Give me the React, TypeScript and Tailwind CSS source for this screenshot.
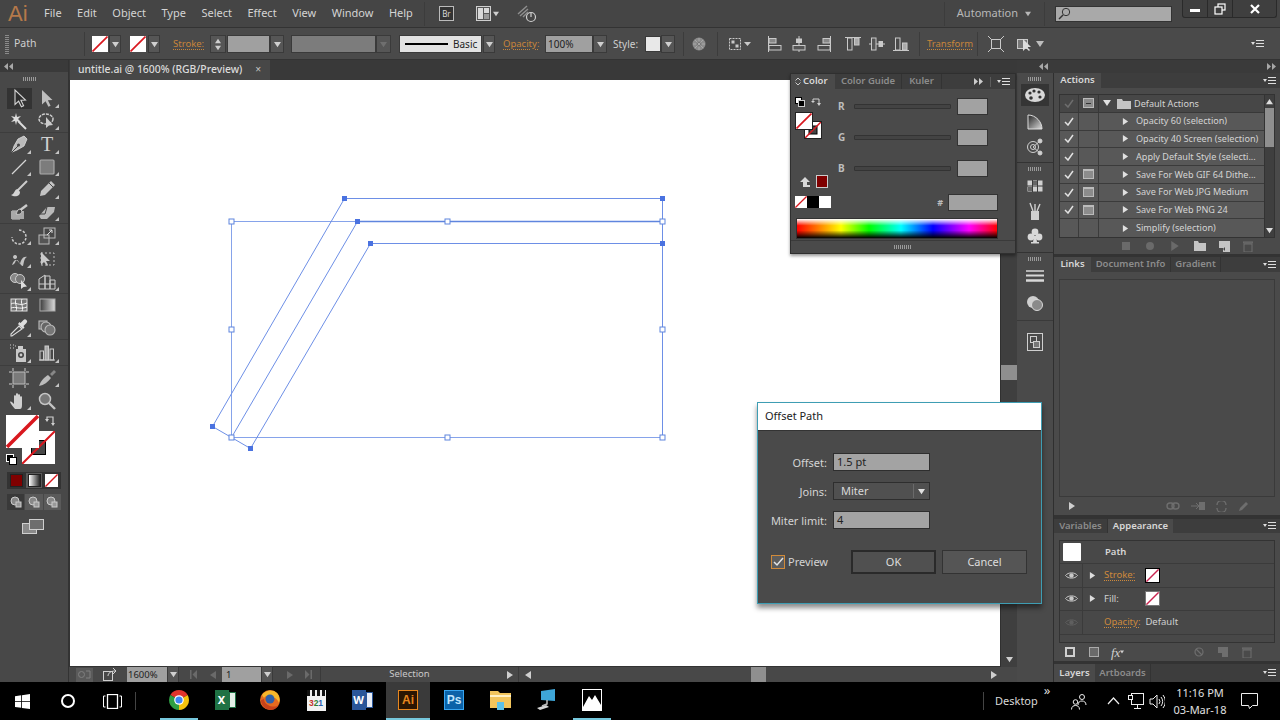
import React from "react";

const L = "#c9c9c9";

function NoneBox({ s = 16, className = "", c = "#d9181f" }: { s?: number; className?: string; c?: string }) {
  return (
    <svg width={s} height={s} viewBox="0 0 16 16" className={className}>
      <rect x="0" y="0" width="16" height="16" fill="#fff" />
      <line x1="0.5" y1="15.5" x2="15.5" y2="0.5" stroke={c} strokeWidth="1.7" />
    </svg>
  );
}

function Caret({ c = "#cfcfcf", dir = "down", s = 7 }: { c?: string; dir?: "down" | "right" | "left" | "up"; s?: number }) {
  const p = { down: "0,1 8,1 4,7", right: "1,0 7,4 1,8", left: "7,0 1,4 7,8", up: "0,7 8,7 4,1" }[dir];
  return (
    <svg width={s} height={s} viewBox="0 0 8 8">
      <polygon points={p} fill={c} />
    </svg>
  );
}

function Dd({ w = "w-[12px]", ml = "", c = "#cfcfcf" }: { w?: string; ml?: string; c?: string }) {
  return (
    <div className={`${w} ${ml} h-[18px] bg-[#565656] border border-[#3a3a3a] flex items-center justify-center shrink-0`}>
      <Caret c={c} />
    </div>
  );
}

function PanelMenu() {
  return (
    <svg width="14" height="10" viewBox="0 0 14 10">
      <polygon points="0,3 4,3 2,6" fill="#ddd" />
      <path d="M5 1.5h8M5 4.5h8M5 7.5h8" stroke="#ddd" strokeWidth="1" />
    </svg>
  );
}

function Grip({ w = 16 }: { w?: number }) {
  return (
    <svg width={w} height="4" viewBox={`0 0 ${w} 4`}>
      {Array.from({ length: Math.floor(w / 2) }).map((_, i) => (
        <rect key={i} x={i * 2} y="0" width="1" height="4" fill="#9a9a9a" />
      ))}
    </svg>
  );
}

function Sep({ ml = "", h = "h-[24px]" }: { ml?: string; h?: string }) {
  return <div className={`w-px ${h} ${ml} bg-[#3c3c3c] shrink-0`} />;
}

function Chev({ dir }: { dir: "left" | "right" }) {
  return (
    <svg width="9" height="7" viewBox="0 0 9 7">
      <path d={dir === "left" ? "M4 0v7L0 3.5zM9 0v7L5 3.5z" : "M0 0v7l4-3.5zM5 0v7l4-3.5z"} fill="#a8a8a8" />
    </svg>
  );
}

function AlignIcon({ v }: { v: number }) {
  const variants: React.ReactNode[] = [
    <g key="0"><path d="M1.5 0v16" stroke={L} /><rect x="2" y="2.5" width="7" height="4.5" fill="#888" stroke={L} /><rect x="2" y="9.5" width="12" height="4.5" fill="none" stroke={L} /></g>,
    <g key="1"><path d="M8 0v16" stroke={L} /><rect x="5" y="2.5" width="6" height="4.5" fill={L} /><rect x="2" y="9.5" width="12" height="4.5" fill="#555" stroke={L} /></g>,
    <g key="2"><path d="M14.5 0v16" stroke={L} /><rect x="7" y="2.5" width="7" height="4.5" fill="#888" stroke={L} /><rect x="2" y="9.5" width="12" height="4.5" fill="none" stroke={L} /></g>,
    <g key="3"><path d="M0 1.5h16" stroke={L} /><rect x="2.5" y="2" width="4.5" height="12" fill="none" stroke={L} /><rect x="9.5" y="2" width="4.5" height="7" fill="#aaa" stroke={L} /></g>,
    <g key="4"><path d="M0 8h16" stroke={L} /><rect x="2.5" y="2" width="4.5" height="12" fill="#555" stroke={L} /><rect x="9.5" y="5" width="4.5" height="6" fill={L} /></g>,
    <g key="5"><path d="M0 14.5h16" stroke={L} /><rect x="2.5" y="2" width="4.5" height="12" fill="none" stroke={L} /><rect x="9.5" y="7" width="4.5" height="7" fill="#aaa" stroke={L} /></g>,
  ];
  return <svg width="16" height="16" viewBox="0 0 16 16" className="shrink-0">{variants[v]}</svg>;
}

const toolIcons: Record<string, React.ReactNode> = {
  sel: <path d="M6 2v14.5l3.6-3.3 2.8 5.6 2.2-1-2.7-5.5 4.6-.3z" fill="#2d2d2d" stroke="#d5d5d5" strokeWidth="1.1" />,
  direct: <path d="M5 2v14.5l3.6-3.3 2.8 5.6 2.2-1-2.7-5.5 4.6-.3z" fill="#bdbdbd" />,
  wand: <g><path d="M9 10l8 8" stroke="#ddd" strokeWidth="2" /><path d="M7 2l1 4 4-1-3 3 3 3-4-1-1 4-1-4-4 1 3-3-3-3 4 1z" fill="#ddd" /></g>,
  lasso: <g><ellipse cx="9" cy="8" rx="7" ry="5" fill="none" stroke="#ccc" strokeWidth="1.5" strokeDasharray="3 1" /><path d="M9 6v11l3-2.5 4-.5z" fill="#ccc" /></g>,
  pen: <g><path d="M15 2l3 3-3 7-7 4-5 2 2-6 4-7z" fill="#bbb" stroke="#ddd" strokeWidth=".8" /><path d="M3 18l6-6" stroke="#444" /><circle cx="9.5" cy="11" r="1.5" fill="#444" /></g>,
  line: <path d="M3 17L17 3" stroke="#d5d5d5" strokeWidth="1.2" />,
  rect: <rect x="3" y="3" width="14" height="14" rx="1" fill="#7c7c7c" stroke="#a9a9a9" strokeWidth="1.2" />,
  brush: <g><path d="M18 2L9 11" stroke="#ccc" strokeWidth="2" /><path d="M9 10c-4 0-3 5-7 6 3 2 9 2 9-3z" fill="#d3d3d3" /></g>,
  pencil: <g><path d="M14 2l4 4-10 10-5 1 1-5z" fill="#c4c4c4" /><path d="M12 4l4 4" stroke="#444" /></g>,
  blob: <g><path d="M3 9h6l2-2v10H3z" fill="none" stroke="#ccc" strokeWidth="1" /><rect x="2" y="9" width="13" height="8" fill="#a8a8a8" /><path d="M18 3l-8 6" stroke="#ccc" strokeWidth="2.4" /><path d="M11 7c-3 0-3 4-4 5 3 1 6 0 6-3z" fill="#444" stroke="#ccc" /></g>,
  eraser: <g><path d="M2 14l8-9h8l-1 5-7 7H4z" fill="#b9b9b9" /><path d="M10 5l-2 7H2" stroke="#444" fill="none" /></g>,
  rotate: <path d="M10 4a7 7 0 1 1-7 7" fill="none" stroke="#ccc" strokeWidth="1.5" strokeDasharray="2.5 1.5" />,
  scale: <g><rect x="2" y="9" width="10" height="9" fill="#555" stroke="#bbb" /><rect x="7" y="2" width="11" height="10" fill="none" stroke="#bbb" /><path d="M10 9l5-5M12 4h3v3" stroke="#ddd" fill="none" /></g>,
  warp: <path d="M3 16c3-9 6-4 8-1 1-4 3-8 7-7-3 1-3 6-4 9-3 0-4-6-6-6s-1 4-5 5zM6 6a2 2 0 1 0 .1 0" fill="#c4c4c4" />,
  free: <g><rect x="4" y="4" width="13" height="12" fill="none" stroke="#bbb" strokeDasharray="2 2" /><path d="M4 3v13l3-3 3 4 1-1-2-4h4z" fill="#c9c9c9" /></g>,
  shape: <g><circle cx="6" cy="6" r="4.5" fill="#888" stroke="#ccc" /><circle cx="11" cy="7" r="4.5" fill="#777" stroke="#ccc" /><path d="M12 8v9l2.5-2 3.5-.5z" fill="#ddd" /></g>,
  persp: <g fill="none" stroke="#ccc"><path d="M2 17V7l6-4v14M8 17V4h5v13M13 17V8h5v9M2 12h16M2 17h16" /></g>,
  mesh: <g><rect x="2" y="4" width="16" height="12" fill="#777" stroke="#ddd" /><path d="M2 9c5-3 7 3 16-1M2 13c5-2 8 2 16-1M7 4c-2 4 2 8 0 12M13 4c-2 4 2 8 0 12" stroke="#fff" fill="none" strokeWidth=".9" /></g>,
  grad: <g><defs><linearGradient id="tg"><stop offset="0" stopColor="#3c3c3c" /><stop offset="1" stopColor="#dcdcdc" /></linearGradient></defs><rect x="3" y="4" width="15" height="12" fill="url(#tg)" stroke="#aaa" /></g>,
  drop: <g><path d="M3 18l-1 0 0-2 8-8 3 3z" fill="none" stroke="#ddd" strokeWidth="1.1" /><path d="M9 6l5 5 1.5-1.5-1-1.5 3-3a2 2 0 0 0-3-3l-3 3-1-1z" fill="#ddd" /></g>,
  blend: <g fill="#666" stroke="#bbb" strokeWidth="1.1"><rect x="2" y="3" width="8" height="8" /><circle cx="9" cy="9" r="5" /><circle cx="13" cy="12" r="5" fill="#777" /></g>,
  spray: <g><rect x="7" y="6" width="10" height="13" fill="#c8c8c8" /><circle cx="12" cy="12" r="3" fill="#444" /><circle cx="12" cy="12" r="1.4" fill="#ccc" /><rect x="9" y="3" width="5" height="3" fill="#ccc" /><path d="M1 2h1M4 2h1M1 5h1M4 5h1M6 3h1" stroke="#ccc" /></g>,
  graph: <g fill="none" stroke="#ccc"><path d="M2 17h16" /><rect x="3" y="8" width="3.5" height="9" /><rect x="8" y="3" width="3.5" height="14" fill="#aaa" /><rect x="13" y="6" width="3.5" height="11" /></g>,
  board: <g><rect x="4" y="4" width="12" height="12" fill="#7a7a7a" stroke="#bbb" /><path d="M4 0v3M16 0v3M4 17v3M16 17v3M0 4h3M0 16h3M17 4h3M17 16h3" stroke="#ccc" /></g>,
  slice: <g><path d="M2 18c2-6 6-9 9-11l3 3c-3 4-7 7-12 8z" fill="#bbb" /><path d="M13 6l4-4 2 2-4 4z" fill="#888" /></g>,
  hand: <path d="M6 18c-2-2-4-5-5-7 1-1 2 0 4 2V5c0-1 2-1 2 0v4-6c0-1 2-1 2 0v6-5c0-1 2-1 2 0v5-3c0-1 2-1 2 0v8c0 3-1 4-2 4z" fill="#d0d0d0" />,
  zoom: <g><circle cx="8" cy="8" r="5.5" fill="#777" stroke="#c4c4c4" strokeWidth="1.5" /><path d="M12 12l6 6" stroke="#c4c4c4" strokeWidth="2.4" /></g>,
};

function Tool({ id, fly, active }: { id: string; fly?: boolean; active?: boolean }) {
  return (
    <div className="relative flex items-center justify-center">
      {active && <div className="absolute left-[2px] right-[1px] top-px bottom-px bg-[#333333]" />}
      {id === "type" ? (
        <span className="relative font-['Liberation_Serif',serif] text-[20px] leading-none text-[#d0d0d0]">T</span>
      ) : (
        <svg width="20" height="20" viewBox="0 0 20 20" className="relative">{toolIcons[id]}</svg>
      )}
      {fly && <div className="absolute right-[2px] bottom-[2px] w-0 h-0 border-l-[4px] border-l-transparent border-b-[4px] border-b-[#c4c4c4]" />}
    </div>
  );
}

function ToolGroup({ h, items, last }: { h: string; items: [string, boolean, boolean?][]; last?: boolean }) {
  return (
    <div className={`${h} grid grid-cols-[28px_28px] auto-rows-fr pl-[5px] ${last ? "" : "border-b border-[#3d3d3d]"}`}>
      {items.map(([id, fly, active]) => (
        <Tool key={id} id={id} fly={fly} active={active} />
      ))}
    </div>
  );
}

function LeftTools() {
  return (
    <div className="w-[69px] shrink-0 bg-[#484848] border-r border-[#333333] flex flex-col">
      <div className="h-[12px] bg-[#3a3a3a] flex items-center pl-[4px]">
        <Chev dir="left" />
      </div>
      <div className="h-[15px] flex justify-center items-center pb-[2px] pr-[8px]"><Grip w={14} /></div>
      <ToolGroup h="h-[46px]" items={[["sel", false, true], ["direct", true], ["wand", false], ["lasso", true]]} />
      <ToolGroup h="h-[91px]" items={[["pen", true], ["type", true], ["line", true], ["rect", true], ["brush", false], ["pencil", true], ["blob", false], ["eraser", true]]} />
      <ToolGroup h="h-[70px]" items={[["rotate", true], ["scale", true], ["warp", true], ["free", false], ["shape", true], ["persp", true]]} />
      <ToolGroup h="h-[46px]" items={[["mesh", false], ["grad", false], ["drop", true], ["blend", false]]} />
      <ToolGroup h="h-[26px]" items={[["spray", true], ["graph", true]]} />
      <ToolGroup h="h-[46px]" last items={[["board", false], ["slice", true], ["hand", true], ["zoom", false]]} />
      <div className="relative h-[52px] mt-[3px]">
        <div className="absolute left-[22px] top-[16px] w-[33px] h-[33px] bg-white">
          <div className="absolute left-[9px] top-[9px] w-[15px] h-[15px] bg-[#484848] border border-black" />
          <svg width="33" height="33" viewBox="0 0 33 33" className="absolute inset-0">
            <line x1="0" y1="33" x2="33" y2="0" stroke="#d9181f" strokeWidth="2" />
          </svg>
        </div>
        <NoneBox s={33} className="absolute left-[6px] top-0" />
        <svg width="12" height="12" viewBox="0 0 12 12" className="absolute left-[45px] top-0">
          <path d="M2 5V2h6v6" stroke="#cfcfcf" fill="none" strokeWidth="1.2" />
          <polygon points="0,4 4,4 2,7" fill="#cfcfcf" />
          <polygon points="6,8 10,8 8,11" fill="#cfcfcf" />
        </svg>
        <div className="absolute left-[6px] top-[39px] w-[8px] h-[8px] bg-black border border-white" />
        <div className="absolute left-[9px] top-[42px] w-[8px] h-[8px] bg-white border border-black" />
      </div>
      <div className="mx-[7px] mt-[5px] h-[17px] flex bg-[#333333] p-px gap-px">
        <div className="flex-1 flex items-center justify-center"><div className="w-[13px] h-[13px] bg-[#7f0000] border border-[#222222]" /></div>
        <div className="flex-1 flex items-center justify-center bg-[#5a5a5a]"><div className="w-[13px] h-[13px] border border-[#222222] bg-[linear-gradient(to_right,#ffffff,#222222)]" /></div>
        <div className="flex-1 flex items-center justify-center"><NoneBox s={13} /></div>
      </div>
      <div className="mx-[7px] mt-[5px] h-[16px] flex gap-px">
        {[0, 1, 2].map((i) => (
          <div key={i} className={`flex-1 flex items-center justify-center ${i === 0 ? "bg-[#393939]" : "bg-[#5a5a5a]"}`}>
            <svg width="12" height="12" viewBox="0 0 12 12">
              <circle cx="5" cy="5" r="4" fill="#888" stroke="#ccc" />
              <rect x="6" y="6" width="5" height="5" fill="#999" stroke="#ccc" />
            </svg>
          </div>
        ))}
      </div>
      <div className="flex justify-center mt-[9px] pr-[2px]">
        <svg width="22" height="15" viewBox="0 0 22 15">
          <rect x="0.5" y="4.5" width="14" height="10" fill="#8a8a8a" stroke="#cfcfcf" />
          <rect x="7.5" y="0.5" width="14" height="10" fill="#6e6e6e" stroke="#cfcfcf" />
        </svg>
      </div>
    </div>
  );
}

function Canvas() {
  const handles: [number, number][] = [[231, 221], [447, 221], [662, 221], [231, 329], [662, 329], [231, 437], [447, 437], [662, 437]];
  const anchors: [number, number][] = [[344, 198], [357, 221], [370, 243], [212, 426], [250, 448], [662, 198], [662, 243]];
  return (
    <svg viewBox="70 80 930 586" className="block w-[930px] h-[586px]">
      <g fill="none" stroke="#6d8fe6" strokeWidth="1">
        <rect x="231.5" y="221.5" width="431" height="216" stroke="#86a3ea" />
        <path d="M344.5 198.5H662.5V437.5" />
        <path d="M344.5 198.5L212.5 426.5L231.5 437.5L250.5 448.5L370.5 243.5H662.5" />
        <path d="M231.5 437.5L357.5 221.5" />
        <path d="M357.5 221.5H662.5" strokeWidth="1.6" stroke="#5f85de" />
      </g>
      {handles.map(([x, y]) => (
        <rect key={`${x}-${y}`} x={x - 2} y={y - 2} width="5" height="5" fill="#fff" stroke="#5f85de" />
      ))}
      {anchors.map(([x, y]) => (
        <rect key={`${x}-${y}`} x={x - 2} y={y - 2} width="5" height="5" fill="#4a72e0" />
      ))}
    </svg>
  );
}

function ColorPanel() {
  return (
    <div className="absolute left-[790px] top-[73px] w-[226px] h-[181px] bg-[#4a4a4a] border border-[#2f2f2f] flex flex-col shadow-[0_2px_3px_rgba(0,0,0,0.4)]">
      <div className="h-[15px] bg-[#3d3d3d] flex items-stretch text-[9.5px] font-semibold shrink-0">
        <div className="w-[44px] bg-[#4a4a4a] flex items-center pl-[4px] gap-[2px] text-[#d8d8d8]">
          <svg width="6" height="9" viewBox="0 0 6 9"><path d="M0.5 3.5L3 1l2.5 2.5M0.5 5.5L3 8l2.5-2.5" fill="none" stroke="#ccc" /></svg>
          Color
        </div>
        <div className="w-[67px] flex items-center justify-center text-[#8c8c8c] border-r border-[#333333]">Color Guide</div>
        <div className="w-[40px] flex items-center justify-center text-[#8c8c8c] border-r border-[#333333]">Kuler</div>
        <div className="flex-1 flex items-center justify-end gap-[6px] pr-[4px]">
          <svg width="10" height="7" viewBox="0 0 10 7"><path d="M0 0l4 3.5L0 7zM5 0l4 3.5L5 7z" fill="#ccc" /></svg>
          <div className="w-px h-[10px] bg-[#5c5c5c]" />
          <PanelMenu />
        </div>
      </div>
      <div className="flex-1 flex">
        <div className="w-[47px] shrink-0 flex flex-col pl-[4px] pt-[7px]">
          <div className="flex items-center gap-[6px] h-[11px]">
            <div className="relative w-[10px] h-[10px]">
              <div className="absolute left-0 top-0 w-[7px] h-[7px] bg-white border border-black" />
              <div className="absolute left-[3px] top-[3px] w-[7px] h-[7px] bg-black border border-[#ccc]" />
            </div>
            <svg width="11" height="10" viewBox="0 0 11 10"><path d="M2 5V2h6v5" stroke="#cfcfcf" fill="none" /><polygon points="0,4 4,4 2,6" fill="#cfcfcf" /><polygon points="6,6 10,6 8,9" fill="#cfcfcf" /></svg>
          </div>
          <div className="relative h-[30px] mt-[5px]">
            <div className="absolute left-[9px] top-[9px] w-[18px] h-[18px] bg-white border border-[#222]">
              <svg width="16" height="16" viewBox="0 0 16 16"><rect x="4" y="4" width="8" height="8" fill="#444" stroke="#000" /><line x1="0" y1="16" x2="16" y2="0" stroke="#d9181f" strokeWidth="1.5" /></svg>
            </div>
            <NoneBox s={18} className="absolute left-0 top-0 border border-[#222]" />
          </div>
          <div className="flex items-center gap-[4px] mt-[33px] pl-[5px]">
            <svg width="10" height="10" viewBox="0 0 10 10"><path d="M5 0L10 5H7V8H10V10H3V5H0z" fill="#d8d8d8" /></svg>
            <div className="w-[12px] h-[13px] ml-[2px] bg-[#7f0000] border border-[#cccccc]" />
          </div>
          <div className="flex mt-[8px] w-[36px] h-[13px]">
            <NoneBox s={12} />
            <div className="w-[12px] h-[12px] bg-black" />
            <div className="w-[12px] h-[12px] bg-white" />
          </div>
        </div>
        <div className="flex-1 flex flex-col pt-[9px]">
          {["R", "G", "B"].map((c) => (
            <div key={c} className="h-[31px] flex items-start shrink-0">
              <div className="w-[16px] text-[10px] font-bold text-[#bdbdbd] leading-[17px]">{c}</div>
              <div className="w-[97px] h-[5px] mt-[6px] bg-[#434343] border border-[#333333] rounded-[1px]" />
              <div className="w-[31px] h-[17px] ml-[6px] bg-[#a2a2a2] border border-[#333333]" />
            </div>
          ))}
          <div className="flex items-center justify-end mt-[3px] pr-[17px] gap-[5px] h-[17px]">
            <span className="text-[9px] font-bold text-[#bdbdbd]">#</span>
            <div className="w-[50px] h-[17px] bg-[#a2a2a2] border border-[#333333]" />
          </div>
        </div>
      </div>
      <div className="ml-[5px] mr-[17px] mt-px h-[21px] bg-[linear-gradient(to_bottom,#ffffff_0%,rgba(255,255,255,0)_35%,rgba(0,0,0,0)_60%,#000000_100%),linear-gradient(to_right,#ff0000,#ffff00_22%,#00ff00_36%,#00ffff_52%,#0000ff_68%,#ff00ff_86%,#ff0000)] border border-[#333333] shrink-0" />
      <div className="h-[13px] mt-[1px] flex items-center justify-center border-t border-[#3a3a3a]"><Grip w={18} /></div>
    </div>
  );
}

function Dock() {
  const Icon = ({ children }: { children: React.ReactNode }) => (
    <div className="mx-[4px] h-[25px] flex items-center justify-center">{children}</div>
  );
  return (
    <div className="w-[37px] shrink-0 bg-[#3a3a3a] flex flex-col">
      <div className="h-[13px] flex items-center justify-end pr-[6px]"><Chev dir="left" /></div>
      <div className="h-[90px] bg-[#4a4a4a] border-b border-[#333333] border-r border-r-[#2f2f2f] pt-[2px]">
        <div className="flex justify-center h-[8px] items-center"><Grip w={14} /></div>
        <div className="mt-[1px] h-[22px] mx-[4px] bg-[#353535] flex items-center justify-center">
          <svg width="22" height="16" viewBox="0 0 22 16">
            <ellipse cx="11" cy="8" rx="10" ry="7" fill="#d8d8d8" />
            <circle cx="6" cy="6" r="1.6" fill="#333" /><circle cx="10" cy="4" r="1.6" fill="#333" /><circle cx="15" cy="5" r="1.6" fill="#333" /><circle cx="16" cy="10" r="1.6" fill="#333" /><circle cx="7" cy="11" r="1.8" fill="#333" />
          </svg>
        </div>
        <div className="h-[3px]" />
        <Icon>
          <svg width="16" height="16" viewBox="0 0 16 16"><defs><linearGradient id="dg" x1="0" y1="0" x2="1" y2="1"><stop offset="0" stopColor="#222" /><stop offset="1" stopColor="#ddd" /></linearGradient></defs><path d="M1 1c8 0 14 7 14 14H1z" fill="url(#dg)" stroke="#ddd" /></svg>
        </Icon>
        <Icon>
          <svg width="18" height="18" viewBox="0 0 18 18" fill="none" stroke="#d0d0d0"><circle cx="7" cy="9" r="5.5" /><circle cx="7" cy="9" r="2.5" /><path d="M7 9l7-6M7 9l7 6" /><circle cx="14" cy="3" r="2" fill="#d0d0d0" /><circle cx="14" cy="15" r="2" fill="#d0d0d0" /></svg>
        </Icon>
      </div>
      <div className="h-[90px] bg-[#4a4a4a] border-b border-[#333333] border-r border-r-[#2f2f2f] pt-[2px]">
        <div className="flex justify-center h-[8px] items-center"><Grip w={14} /></div>
        <Icon>
          <svg width="16" height="12" viewBox="0 0 16 12"><rect x=".5" y=".5" width="15" height="11" fill="#d0d0d0" /><path d="M5.5 0v12M10.5 0v12M0 6h16" stroke="#3c3c3c" /><rect x="1" y="7" width="4" height="4" fill="#666" /><rect x="6" y="1" width="4" height="4" fill="#666" /></svg>
        </Icon>
        <Icon>
          <svg width="14" height="20" viewBox="0 0 14 20"><rect x="3" y="10" width="8" height="9" fill="#d0d0d0" /><path d="M5 10L2 2M7 10V3M9 10l3-7" stroke="#d0d0d0" strokeWidth="1.4" /></svg>
        </Icon>
        <Icon>
          <svg width="16" height="16" viewBox="0 0 16 16" fill="#d8d8d8"><circle cx="8" cy="4" r="3.4" /><circle cx="4" cy="9" r="3.4" /><circle cx="12" cy="9" r="3.4" /><path d="M7 8h2l1 6H6z" /><rect x="4" y="14" width="8" height="1.5" /></svg>
        </Icon>
      </div>
      <div className="flex-1 bg-[#4a4a4a] border-r border-[#2f2f2f] pt-[2px]">
        <div className="flex justify-center h-[8px] items-center"><Grip w={14} /></div>
        <Icon>
          <svg width="18" height="12" viewBox="0 0 18 12"><path d="M0 1h18" stroke="#d8d8d8" strokeWidth="1.5" /><path d="M0 5.5h18" stroke="#d8d8d8" strokeWidth="2" /><path d="M0 10.5h18" stroke="#d8d8d8" strokeWidth="2.5" /></svg>
        </Icon>
        <div className="h-[2px]" />
        <Icon>
          <svg width="18" height="18" viewBox="0 0 18 18"><circle cx="7" cy="8" r="6" fill="#cfcfcf" /><circle cx="11" cy="11" r="5.5" fill="#8a8a8a" stroke="#d8d8d8" /></svg>
        </Icon>
        <div className="h-[6px] border-b border-[#3a3a3a]" />
        <div className="h-[8px]" />
        <Icon>
          <svg width="16" height="18" viewBox="0 0 16 18" fill="none" stroke="#cfcfcf"><rect x=".5" y=".5" width="15" height="17" /><rect x="3.5" y="3.5" width="6" height="6" /><rect x="6.5" y="8.5" width="6" height="6" fill="#777" /></svg>
        </Icon>
      </div>
    </div>
  );
}

function Tabs({ tabs, active, h = "h-[15px]" }: { tabs: [string, string][]; active: string; h?: string }) {
  return (
    <div className={`${h} shrink-0 bg-[#3d3d3d] flex items-stretch text-[9.5px] font-semibold`}>
      {tabs.map(([t, w]) => (
        <div key={t} className={`${w} flex items-center justify-center whitespace-nowrap ${t === active ? "bg-[#4a4a4a] text-[#d8d8d8]" : "text-[#8c8c8c] border-r border-[#333333]"}`}>{t}</div>
      ))}
      <div className="flex-1 flex items-center justify-end pr-[3px]"><PanelMenu /></div>
    </div>
  );
}

function FootIcons({ children, h = "h-[18px]" }: { children: React.ReactNode; h?: string }) {
  return <div className={`${h} shrink-0 relative flex items-center`}>{children}</div>;
}

const Chk = ({ dim }: { dim?: boolean }) => (
  <svg width="10" height="9" viewBox="0 0 10 9"><path d="M1 5l3 3 5-7" fill="none" stroke={dim ? "#6e6e6e" : "#e2e2e2"} strokeWidth="1.5" /></svg>
);

function Actions() {
  const rows: [string, boolean, boolean][] = [
    ["Opacity 60 (selection)", true, false],
    ["Opacity 40 Screen (selection)", true, false],
    ["Apply Default Style (selecti...", true, false],
    ["Save For Web GIF 64 Dithe...", true, true],
    ["Save For Web JPG Medium", true, true],
    ["Save For Web PNG 24", true, true],
    ["Simplify (selection)", false, false],
  ];
  return (
    <div className="h-[181px] shrink-0 flex flex-col">
      <Tabs tabs={[["Actions", "w-[47px]"]]} active="Actions" />
      <div className="flex-1 bg-[#4a4a4a] flex flex-col pt-[6px]">
        <div className="mx-[5px] h-[144px] border border-[#333333] flex shrink-0">
          <div className="flex-1 grid auto-rows-fr text-[9.1px] text-[#d4d4d4]">
            <div className="flex items-stretch bg-[#474747] border-b border-[#383838]">
              <div className="w-[19px] flex items-center justify-center border-r border-[#383838]"><Chk dim /></div>
              <div className="w-[20px] flex items-center justify-center border-r border-[#383838]"><div className="w-[11px] h-[10px] bg-[#8c8c8c] border border-[#bbbbbb] flex items-center justify-center"><div className="w-[5px] h-px bg-[#333333]" /></div></div>
              <div className="flex items-center pl-[4px]"><Caret s={8} c="#e0e0e0" /></div>
              <svg width="14" height="11" viewBox="0 0 14 11" className="ml-[6px] self-center"><path d="M0 1h5l1 2h8v8H0z" fill="#c4c4c4" /></svg>
              <div className="flex items-center pl-[3px] whitespace-nowrap">Default Actions</div>
            </div>
            {rows.map(([t, c, b]) => (
              <div key={t} className="flex items-stretch bg-[#585858] border-b border-[#3b3b3b] last:border-b-0 whitespace-nowrap">
                <div className="w-[19px] flex items-center justify-center border-r border-[#3b3b3b]">{c && <Chk />}</div>
                <div className="w-[20px] flex items-center justify-center border-r border-[#3b3b3b]">{b && <div className="w-[11px] h-[10px] bg-[#8c8c8c] border border-[#bbbbbb] border-t-[2px]" />}</div>
                <div className="flex items-center pl-[23px]"><Caret dir="right" s={7} c="#e0e0e0" /></div>
                <div className="flex items-center pl-[7px]">{t}</div>
              </div>
            ))}
          </div>
          <div className="w-[10px] bg-[#3f3f3f] flex flex-col items-center border-l border-[#333333]">
            <div className="h-[13px] flex items-center"><Caret dir="up" c="#dddddd" /></div>
            <div className="w-full h-[39px] bg-[#8f8f8f]" />
            <div className="flex-1" />
            <div className="h-[13px] flex items-center"><Caret c="#dddddd" /></div>
          </div>
        </div>
        <FootIcons h="h-[16px]">
          <div className="ml-[68px] flex items-center">
            <div className="w-[8px] h-[8px] bg-[#6a6a6a]" />
            <div className="ml-[16px] w-[8px] h-[8px] rounded-full bg-[#6a6a6a]" />
            <div className="ml-[16px]"><Caret dir="right" s={10} c="#6a6a6a" /></div>
            <svg width="12" height="10" viewBox="0 0 12 10" className="ml-[14px]"><path d="M0 0h4l1 2h7v8H0z" fill="#c4c4c4" /></svg>
            <svg width="11" height="11" viewBox="0 0 11 11" className="ml-[13px]"><path d="M0 0h11v11H4V7H0z" fill="#c4c4c4" /><path d="M4 8l2-2v4z" fill="#444" /></svg>
            <svg width="10" height="11" viewBox="0 0 10 11" className="ml-[13px]"><path d="M1 3h8v8H1zM0 1h10v1H0z" fill="none" stroke="#6e6e6e" /></svg>
          </div>
        </FootIcons>
      </div>
    </div>
  );
}

function Links() {
  return (
    <div className="h-[258px] mt-[3px] shrink-0 flex flex-col">
      <Tabs tabs={[["Links", "w-[37px]"], ["Document Info", "w-[80px]"], ["Gradient", "w-[50px]"]]} active="Links" />
      <div className="flex-1 bg-[#4a4a4a] flex flex-col pt-[7px]">
        <div className="mx-[5px] h-[218px] border border-[#3a3a3a] bg-[#4a4a4a] shrink-0" />
        <FootIcons>
          <div className="ml-[14px]"><Caret dir="right" s={8} c="#cfcfcf" /></div>
          <div className="ml-auto mr-[31px] flex items-center gap-[11px]">
            <svg width="14" height="8" viewBox="0 0 14 8" fill="none" stroke="#6e6e6e" strokeWidth="1.4"><rect x="1" y="1" width="7" height="6" rx="3" /><rect x="6" y="1" width="7" height="6" rx="3" /></svg>
            <svg width="14" height="10" viewBox="0 0 14 10"><path d="M0 5h7M5 2l3 3-3 3" stroke="#6e6e6e" fill="none" /><rect x="8" y="1" width="6" height="8" fill="#6e6e6e" /></svg>
            <svg width="11" height="11" viewBox="0 0 11 11" fill="none" stroke="#6e6e6e" strokeWidth="1.3"><path d="M1 4a4.5 4.5 0 0 1 9 0M10 7a4.5 4.5 0 0 1-9 0" /></svg>
            <svg width="11" height="11" viewBox="0 0 11 11"><path d="M1 10l1-3 6-6 2 2-6 6z" fill="#6e6e6e" /></svg>
          </div>
        </FootIcons>
      </div>
    </div>
  );
}

function Eye({ dim }: { dim?: boolean }) {
  const c = dim ? "#5f5f5f" : "#c8c8c8";
  return (
    <svg width="13" height="9" viewBox="0 0 13 9">
      <path d="M.5 4.5C3 1 10 1 12.5 4.5 10 8 3 8 .5 4.5z" fill="none" stroke={c} />
      <circle cx="6.5" cy="4.5" r="2.2" fill={c} />
    </svg>
  );
}

function Appearance() {
  const O = "text-[#cf8a3c] underline decoration-dotted underline-offset-2";
  const Row = ({ eye, dim, caret, children }: { eye?: boolean; dim?: boolean; caret?: boolean; children: React.ReactNode }) => (
    <div className="h-[23.5px] flex items-stretch border-b border-[#3b3b3b] text-[9.5px] text-[#d0d0d0]">
      <div className="w-[23px] border-r border-[#3b3b3b] flex items-center justify-center">{eye && <Eye dim={dim} />}</div>
      <div className="w-[21px] flex items-center justify-center pr-[3px]">{caret && <Caret dir="right" s={7} c="#dddddd" />}</div>
      <div className="flex items-center">{children}</div>
    </div>
  );
  return (
    <div className="h-[142px] mt-[4px] shrink-0 flex flex-col">
      <Tabs h="h-[14px]" tabs={[["Variables", "w-[54px]"], ["Appearance", "w-[65px]"]]} active="Appearance" />
      <div className="flex-1 bg-[#4a4a4a] flex flex-col pt-[7px]">
        <div className="mx-[5px] h-[103px] border border-[#333333] shrink-0 bg-[#484848] flex flex-col">
          <div className="h-[23px] flex items-center border-b border-[#3b3b3b]">
            <div className="ml-[3px] w-[18px] h-[18px] bg-white rounded-[1px]" />
            <span className="ml-[24px] text-[9.5px] font-semibold text-[#d8d8d8]">Path</span>
          </div>
          <Row eye caret>
            <span className={`${O} w-[41px]`}>Stroke:</span>
            <NoneBox s={15} c="#c9234f" className="border border-black" />
          </Row>
          <Row eye caret>
            <span className="w-[41px]">Fill:</span>
            <NoneBox s={15} c="#c9234f" className="border border-[#777777]" />
          </Row>
          <Row eye dim>
            <span className={O}>Opacity:</span>
            <span className="ml-[5px]">Default</span>
          </Row>
        </div>
        <FootIcons>
          <div className="ml-[11px] flex items-center w-[200px]">
            <div className="w-[10px] h-[10px] border-2 border-[#cfcfcf]" />
            <div className="ml-[14px] w-[10px] h-[10px] bg-[#6a6a6a] border border-[#aaaaaa]" />
            <span className="ml-[12px] font-['Liberation_Serif',serif] italic text-[13px] leading-none text-[#d0d0d0]">fx</span>
            <Caret s={4} />
            <div className="ml-auto flex items-center gap-[14px] pr-[13px]">
              <svg width="10" height="10" viewBox="0 0 10 10" fill="none" stroke="#6e6e6e" strokeWidth="1.2"><circle cx="5" cy="5" r="4" /><path d="M2 2l6 6" /></svg>
              <svg width="10" height="10" viewBox="0 0 10 10"><path d="M0 0h10v10H4V6H0z" fill="#6e6e6e" /></svg>
              <svg width="10" height="11" viewBox="0 0 10 11"><path d="M1 3h8v8H1zM0 1h10v1H0z" fill="none" stroke="#6e6e6e" /></svg>
            </div>
          </div>
        </FootIcons>
      </div>
    </div>
  );
}

function Dialog() {
  const Label = ({ children }: { children: React.ReactNode }) => <div className="w-[70px] text-right text-[11px] text-[#d4d4d4] leading-none pr-[1px] whitespace-nowrap">{children}</div>;
  const Field = ({ children }: { children: React.ReactNode }) => (
    <div className="w-[97px] h-[18px] ml-[5px] bg-[#a3a3a3] border border-[#2e2e2e] pl-[3px] text-[11px] leading-[16px] text-[#222222]">{children}</div>
  );
  return (
    <div className="absolute left-[757px] top-[402px] w-[285px] h-[202px] bg-[#4a4a4a] border border-[#3e9db3] flex flex-col shadow-[0_4px_5px_rgba(0,0,0,0.45)]">
      <div className="h-[28px] bg-white border-b border-[#333333] pl-[7px] flex items-center text-[11px] text-[#222222] shrink-0">Offset Path</div>
      <div className="flex items-center pt-[22px]">
        <Label>Offset:</Label>
        <Field>1.5 pt</Field>
      </div>
      <div className="flex items-center mt-[11px]">
        <Label>Joins:</Label>
        <div className="w-[97px] h-[18px] ml-[5px] bg-[#505050] border border-[#2e2e2e] flex items-center pl-[7px] text-[11px] text-[#d8d8d8]">
          <span className="flex-1">Miter</span>
          <div className="w-[16px] h-[14px] border-l border-[#6a6a6a] flex items-center justify-center"><Caret c="#e0e0e0" /></div>
        </div>
      </div>
      <div className="flex items-center mt-[11px]">
        <Label>Miter limit:</Label>
        <Field>4</Field>
      </div>
      <div className="flex items-center mt-[21px] pl-[13px]">
        <div className="w-[14px] h-[14px] border border-[#d08a3a] bg-[#5c5c5c] flex items-center justify-center">
          <svg width="11" height="10" viewBox="0 0 11 10"><path d="M1 5l3 3 6-7" fill="none" stroke="#e4e4e4" strokeWidth="1.5" /></svg>
        </div>
        <span className="ml-[3px] w-[51px] text-[11px] text-[#d4d4d4]">Preview</span>
        <button className="w-[85px] h-[24px] ml-[12px] bg-[#505050] border-2 border-[#2a2a2a] text-[11px] text-[#dddddd]">OK</button>
        <button className="w-[85px] h-[24px] ml-[6px] bg-[#555555] border border-[#333333] text-[11px] text-[#dddddd]">Cancel</button>
      </div>
    </div>
  );
}

function Taskbar() {
  const Slot = ({ w = "w-[46px]", active, under, children }: { w?: string; active?: boolean; under?: boolean; children: React.ReactNode }) => (
    <div className={`${w} h-full shrink-0 flex items-center justify-center border-b-[2px] ${under || active ? "border-b-[#76c7dc]" : "border-b-transparent"} ${active ? "bg-[#3a3a3a]" : ""}`}>{children}</div>
  );
  const B = "font-['Liberation_Sans',sans-serif] font-bold leading-none";
  return (
    <div className="h-[38px] shrink-0 bg-black flex items-stretch">
      <div className="w-[45px] flex items-center justify-center">
        <svg width="15" height="15" viewBox="0 0 15 15" fill="#fff"><path d="M0 2.2L6.2 1.3v5.9H0zM7 1.2L15 0v7.2H7zM0 7.9h6.2v5.9L0 12.9zM7 7.9h8V15l-8-1.1z" /></svg>
      </div>
      <div className="w-[45px] flex items-center justify-center"><div className="w-[14px] h-[14px] rounded-full border-2 border-white" /></div>
      <div className="w-[45px] flex items-center justify-center">
        <svg width="19" height="15" viewBox="0 0 19 15" fill="none" stroke="#fff"><rect x="4.5" y="0.5" width="10" height="14" strokeWidth="1.3" /><path d="M2.5 2H.5v11h2M16.5 2h2v11h-2" /></svg>
      </div>
      <div className="w-[1px] h-[18px] self-center bg-[#444444]" />
      <div className="w-[24px]" />
      <Slot w="w-[38px]" under>
        <svg width="22" height="22" viewBox="0 0 22 22">
          <path d="M11 11L2.34 6A10 10 0 0 1 19.66 6Z" fill="#e0332c" />
          <path d="M11 11L2.34 6A10 10 0 0 0 11 21Z" fill="#2f9e44" />
          <path d="M11 11L19.66 6A10 10 0 0 1 11 21Z" fill="#f4c20d" />
          <circle cx="11" cy="11" r="4.8" fill="#fff" />
          <circle cx="11" cy="11" r="3.6" fill="#3f85f4" />
        </svg>
      </Slot>
      <Slot w="w-[54px]">
        <div className="relative flex items-center">
          <div className="w-[14px] h-[20px] bg-[#1f7244] text-white text-[11px] flex items-center justify-center font-bold">X</div>
          <div className="w-[7px] h-[16px] bg-[#e3efe7] border border-[#1f7244]" />
        </div>
      </Slot>
      <Slot w="w-[36px]">
        <svg width="22" height="22" viewBox="0 0 22 22">
          <circle cx="11" cy="11" r="10" fill="#e66a1f" />
          <path d="M3 6c3-5 11-6 15-2 3 3 3 8 2 10-1-3-3-5-5-5l-3-2C9 6 6 7 5 9z" fill="#f6b62b" />
          <circle cx="11" cy="10" r="4.5" fill="#2f5fa8" />
          <path d="M2 11c0 6 5 10 10 10 3 0 6-2 8-5-3 2-8 2-11 0-2-1-4-3-4-6z" fill="#c8421a" />
        </svg>
      </Slot>
      <Slot w="w-[56px]">
        <div className="w-[19px] h-[21px] bg-[#f2f2f2] flex flex-col">
          <div className="h-[6px] bg-[repeating-linear-gradient(90deg,#111111_0,#111111_3px,#eeeeee_3px,#eeeeee_5px)]" />
          <div className={`${B} text-[8.5px] flex-1 flex items-center justify-center whitespace-nowrap`}>
            <span className="text-[#c4302b]">3</span><span className="text-[#2f7d32]">2</span><span className="text-[#2b5fb0]">1</span>
          </div>
        </div>
      </Slot>
      <Slot w="w-[36px]">
        <div className="flex items-center">
          <div className="w-[14px] h-[20px] bg-[#2a5699] text-white text-[11px] flex items-center justify-center font-bold">W</div>
          <div className="w-[7px] h-[16px] bg-[#e9eef7] border border-[#2a5699]" />
        </div>
      </Slot>
      <div className="w-[6px]" />
      <Slot w="w-[44px]" active>
        <div className={`w-[20px] h-[20px] bg-[#2b1603] border border-[#e8871e] text-[#e8871e] text-[12px] flex items-center justify-center ${B}`}>Ai</div>
      </Slot>
      <Slot w="w-[48px]">
        <div className={`w-[20px] h-[20px] bg-[#0b62a8] border border-[#37a5f0] text-[#bfe4fb] text-[12px] flex items-center justify-center ${B}`}>Ps</div>
      </Slot>
      <Slot w="w-[44px]">
        <svg width="21" height="20" viewBox="0 0 21 20"><path d="M0 1h8l2 2h11v15H0z" fill="#f2c55c" /><rect x="0" y="5" width="21" height="2" fill="#fff1c4" /><rect x="7" y="12" width="7" height="8" fill="#5cc1e8" /></svg>
      </Slot>
      <Slot w="w-[46px]">
        <svg width="24" height="24" viewBox="0 0 24 24"><path d="M8 3l14-2v12L8 12z" fill="#3ea6d8" /><path d="M4 20l9-3 3 2-9 3z" fill="#d6d6d6" /><path d="M14 12v4l-5 2" stroke="#bdbdbd" fill="none" strokeWidth="1.5" /></svg>
      </Slot>
      <div className="w-[5px]" />
      <Slot w="w-[38px]" under>
        <svg width="20" height="22" viewBox="0 0 20 22"><rect width="20" height="22" fill="#fff" /><rect x="1" y="1" width="18" height="17" fill="#000" /><path d="M1 18L7 7l3 4 3-5 6 10v6H1z" fill="#fff" /></svg>
      </Slot>
      <div className="flex-1" />
      <div className="w-px h-[18px] self-center bg-[#444444]" />
      <div className="w-[53px] pl-[11px] flex items-center text-[11px] text-[#d8d8d8]">Desktop</div>
      <div className="w-[20px] text-center text-[13px] text-[#dddddd] leading-none pt-[2px]">»</div>
      <div className="w-[44px] flex items-center justify-center">
        <svg width="16" height="17" viewBox="0 0 16 17" fill="none" stroke="#eeeeee"><circle cx="11" cy="4" r="2.5" /><path d="M7 12c0-3 2-4 4-4s4 1 4 4" /><circle cx="4.5" cy="9" r="2.3" /><path d="M.5 16.5c0-3 2-4 4-4s4 1 4 4" /></svg>
      </div>
      <div className="w-[24px] flex items-center justify-center">
        <svg width="13" height="8" viewBox="0 0 13 8" fill="none" stroke="#eeeeee" strokeWidth="1.2"><path d="M1 7l5.5-6L12 7" /></svg>
      </div>
      <div className="w-[22px] flex items-center justify-center">
        <svg width="16" height="17" viewBox="0 0 16 17" fill="none" stroke="#eeeeee"><rect x="3.5" y=".5" width="12" height="11" /><rect x=".5" y="2.5" width="4" height="4" fill="#000" /><path d="M9.5 12v3M6 15.5h7" /></svg>
      </div>
      <div className="w-[20px] flex items-center justify-center">
        <svg width="16" height="15" viewBox="0 0 16 15" fill="none" stroke="#eeeeee"><path d="M1 5v5h3l4 4V1L4 5z" /><path d="M10 5a4 4 0 0 1 0 5M12 3a7 7 0 0 1 0 9M14 1a10 10 0 0 1 0 13" /></svg>
      </div>
      <div className="w-[66px] flex flex-col items-center justify-center text-[11px] leading-[17px] text-[#e0e0e0] whitespace-nowrap">
        <div>11:16 PM</div>
        <div>03-Mar-18</div>
      </div>
      <div className="w-[47px] flex items-center justify-center pr-[15px]">
        <svg width="17" height="17" viewBox="0 0 17 17" fill="none" stroke="#eeeeee"><path d="M.5.5h16v12h-5l-3 3-1-3H.5z" /></svg>
      </div>
    </div>
  );
}

export default function App() {
  const O = "text-[#c8853a] underline decoration-dotted underline-offset-2";
  const menu = ["File", "Edit", "Object", "Type", "Select", "Effect", "View", "Window", "Help"];
  return (
    <div className="relative w-[1280px] h-[720px] overflow-hidden flex flex-col bg-[#3a3a3a] font-['Noto_Sans','Open_Sans',sans-serif] text-[11px]">
      {/* application bar */}
      <div className="h-[28px] shrink-0 bg-[#454545] border-b border-[#333333] flex items-center text-[#d4d4d4]">
        <span className="w-[44px] pl-[8px] text-[22px] leading-none text-[#b5794a] font-['Liberation_Sans',sans-serif]">Ai</span>
        <div className="flex items-center gap-[15.5px]">
          {menu.map((m) => <span key={m}>{m}</span>)}
        </div>
        <Sep ml="ml-[11px]" />
        <div className="ml-[14px] w-[15px] h-[15px] border border-[#bbbbbb] bg-[#333333] text-[8px] text-[#d8d8d8] flex items-center justify-center">Br</div>
        <svg width="15" height="15" viewBox="0 0 15 15" className="ml-[22px]"><rect x=".5" y=".5" width="14" height="14" fill="#555" stroke="#cfcfcf" /><rect x="2" y="2" width="5" height="11" fill="#d8d8d8" /><rect x="8" y="2" width="5" height="5" fill="#d8d8d8" /><rect x="8" y="8" width="5" height="5" fill="#999" /></svg>
        <div className="ml-[2px]"><Caret s={6} /></div>
        <svg width="20" height="18" viewBox="0 0 20 18" className="ml-[18px]" fill="none" stroke="#8f8f8f"><path d="M1 9l9-8M3 11l8-7M6 12l5-5" strokeWidth="1.4" /><circle cx="14" cy="12" r="4.5" stroke="#d0d0d0" strokeWidth="1.2" /><path d="M14 8v4" stroke="#d0d0d0" strokeWidth="1.2" /></svg>
        <div className="flex-1" />
        <Sep />
        <span className="ml-[12px] text-[#b8b8b8]">Automation</span>
        <div className="ml-[7px]"><Caret s={6} c="#b8b8b8" /></div>
        <Sep ml="ml-[13px]" />
        <div className="ml-[10px] w-[117px] h-[16px] bg-[#a9a9a9] border border-[#333333] flex items-center pl-[2px]">
          <svg width="13" height="13" viewBox="0 0 13 13" fill="none" stroke="#333"><circle cx="8" cy="5" r="3.7" /><path d="M5 8l-4 4" strokeWidth="1.4" /></svg>
        </div>
        <div className="ml-[10px] mr-[3px] h-[18px] self-start flex bg-[#3f3f3f] border border-t-0 border-[#2a2a2a] rounded-b-[3px] text-white">
          <div className="w-[25px] flex items-center justify-center border-r border-[#2a2a2a]"><div className="w-[10px] h-[3px] bg-white mt-[3px]" /></div>
          <div className="w-[25px] flex items-center justify-center border-r border-[#2a2a2a]">
            <svg width="12" height="12" viewBox="0 0 12 12" fill="none" stroke="#fff" strokeWidth="1.2"><rect x="4" y="1" width="7" height="6" /><rect x="1" y="4" width="7" height="7" fill="#3f3f3f" /></svg>
          </div>
          <div className="w-[43px] flex items-center justify-center">
            <svg width="10" height="10" viewBox="0 0 10 10" stroke="#fff" strokeWidth="2.2"><path d="M1 1l8 8M9 1l-8 8" /></svg>
          </div>
        </div>
      </div>

      {/* control bar */}
      <div className="h-[32px] shrink-0 bg-[#4a4a4a] border-b border-[#333333] pt-px flex items-center text-[10.5px] text-[#cfcfcf]">
        <div className="ml-[5px] w-[4px] h-[20px] bg-[repeating-linear-gradient(0deg,#8a8a8a_0,#8a8a8a_1px,transparent_1px,transparent_2px)] shrink-0" />
        <span className="ml-[5px] w-[20px] shrink-0">Path</span>
        <Sep ml="ml-[50px]" />
        <NoneBox s={16} className="ml-[7px] shrink-0" />
        <Dd ml="ml-px" />
        <NoneBox s={16} className="ml-[9px] shrink-0" />
        <Dd ml="ml-[2px]" />
        <span className={`${O} ml-[13px] w-[30px] shrink-0 text-[9.5px] whitespace-nowrap`}>Stroke:</span>
        <div className="ml-[7px] w-[16px] h-[18px] bg-[#565656] border border-[#3a3a3a] flex flex-col items-center justify-center gap-[1px] shrink-0">
          <Caret dir="up" s={6} /><Caret s={6} />
        </div>
        <div className="ml-px w-[43px] h-[18px] bg-[#a0a0a0] border border-[#3a3a3a] shrink-0" />
        <Dd w="w-[14px]" />
        <div className="ml-[7px] w-[85px] h-[18px] bg-[#7c7c7c] border border-[#3a3a3a] shrink-0" />
        <Dd w="w-[15px]" c="#6f6f6f" />
        <div className="ml-[8px] w-[83px] h-[18px] bg-[#e2e2e2] border border-[#3a3a3a] flex items-center pl-[5px] text-[#222222] shrink-0">
          <div className="w-[43px] h-[2px] bg-black" />
          <span className="ml-[5px] text-[10px]">Basic</span>
        </div>
        <Dd ml="ml-px" />
        <span className={`${O} ml-[8px] w-[34px] shrink-0 text-[9.5px] whitespace-nowrap`}>Opacity:</span>
        <div className="ml-[8px] w-[48px] h-[18px] bg-[#a0a0a0] border border-[#3a3a3a] pl-[2px] text-[#222222] leading-[16px] text-[10px] shrink-0">100%</div>
        <Dd w="w-[14px]" />
        <span className="ml-[6px] w-[23px] shrink-0 text-[10px]">Style:</span>
        <div className="ml-[9px] w-[16px] h-[16px] bg-[#e8e8e8] border border-[#3a3a3a] shrink-0" />
        <Dd w="w-[14px]" />
        <Sep ml="ml-[8px]" />
        <svg width="14" height="14" viewBox="0 0 14 14" className="ml-[8px] shrink-0"><circle cx="7" cy="7" r="6.5" fill="#8c8c8c" /><circle cx="7" cy="7" r="2.5" fill="#5c5c5c" /><path d="M7 1v12M1 7h12M3 3l8 8M11 3l-8 8" stroke="#bcbcbc" strokeWidth=".6" /></svg>
        <Sep ml="ml-[11px]" />
        <svg width="24" height="16" viewBox="0 0 24 16" className="ml-[10px] shrink-0" fill="none" stroke={L}><rect x="1.5" y="2.5" width="11" height="11" strokeDasharray="2 1" /><rect x="4" y="5" width="2" height="2" fill={L} /><rect x="8" y="9" width="2" height="2" fill={L} /><polygon points="16,6 23,6 19.5,10" fill={L} stroke="none" /></svg>
        <div className="ml-[15px]"><AlignIcon v={0} /></div>
        <div className="ml-[8px]"><AlignIcon v={1} /></div>
        <div className="ml-[9px]"><AlignIcon v={2} /></div>
        <div className="ml-[13px]"><AlignIcon v={3} /></div>
        <div className="ml-[8px]"><AlignIcon v={4} /></div>
        <div className="ml-[8px]"><AlignIcon v={5} /></div>
        <Sep ml="ml-[10px]" />
        <span className={`${O} ml-[7px] w-[44px] text-[9.5px] shrink-0`}>Transform</span>
        <Sep ml="ml-[6px]" />
        <svg width="16" height="16" viewBox="0 0 16 16" className="ml-[10px] shrink-0" fill="none" stroke={L}><rect x="3.5" y="3.5" width="9" height="9" /><path d="M0 0l3 3M16 0l-3 3M0 16l3-3M16 16l-3-3" /></svg>
        <svg width="18" height="16" viewBox="0 0 18 16" className="ml-[12px] shrink-0"><rect x="1.5" y="3.5" width="10" height="9" fill="#777" stroke={L} /><path d="M7 3v12l3-3 3 3 1-1-3-3h4z" fill="#ddd" /></svg>
        <div className="ml-[2px]"><Caret s={8} c="#bdbdbd" /></div>
        <div className="ml-auto mr-[15px]"><PanelMenu /></div>
      </div>

      {/* workspace */}
      <div className="flex-1 min-h-0 flex">
        <LeftTools />
        <div className="w-[948px] shrink-0 flex flex-col">
          <div className="h-[20px] shrink-0 bg-[#393939] flex items-stretch pl-[1px]">
            <div className="w-[200px] bg-[#474747] flex items-center pl-[8px] text-[10.4px] font-medium text-[#dcdcdc] whitespace-nowrap">
              untitle.ai @ 1600% (RGB/Preview)
              <span className="ml-[13px] text-[#bbbbbb]">×</span>
            </div>
          </div>
          <div className="flex-1 min-h-0 flex">
            <div className="w-px bg-[#333333]" />
            <div className="w-[930px] bg-white border-b border-[#333333]"><Canvas /></div>
            <div className="w-[17px] bg-[#3f3f3f] border-l border-[#303030] flex flex-col items-center">
              <div className="mt-[285px] w-full h-[15px] bg-[#8f8f8f]" />
              <div className="mt-auto mb-[4px]"><Caret c="#cfcfcf" /></div>
            </div>
          </div>
          <div className="h-[15px] shrink-0 bg-[#484848] flex items-center text-[#c8c8c8] text-[9.5px]">
            <div className="ml-[7px] w-[17px] h-[14px] bg-[#5a5a5a] flex items-center justify-center">
              <svg width="13" height="9" viewBox="0 0 13 9" fill="none" stroke="#808080"><circle cx="3.5" cy="4.5" r="3" /><path d="M8 1h4v7H8" /></svg>
            </div>
            <svg width="14" height="13" viewBox="0 0 14 13" className="ml-[10px]" fill="none" stroke="#d0d0d0"><rect x=".5" y="3.5" width="9" height="9" /><path d="M5 8c0-3 3-5 7-5M10 0l3 3-3 3" /></svg>
            <div className="ml-[10px] w-[40px] h-[15px] bg-[#a0a0a0] text-[#222222] pl-[1px] leading-[16px]">1600%</div>
            <Dd w="w-[12px]" />
            <svg width="11" height="9" viewBox="0 0 11 9" className="ml-[11px]"><path d="M0 0h1.5v9H0zM7 0v9L2.5 4.5z" fill="#6a6a6a" /></svg>
            <div className="ml-[8px]"><Caret dir="left" s={8} c="#6a6a6a" /></div>
            <div className="ml-[5px] w-[39px] h-[15px] bg-[#a0a0a0] text-[#222222] pl-[4px] leading-[16px]">1</div>
            <Dd w="w-[12px]" />
            <div className="ml-[13px]"><Caret dir="right" s={8} c="#6a6a6a" /></div>
            <svg width="11" height="9" viewBox="0 0 11 9" className="ml-[7px]"><path d="M9.5 0H11v9H9.5zM4 0v9l4.5-4.5z" fill="#6a6a6a" /></svg>
            <div className="ml-[8px] w-px h-full bg-[#3a3a3a]" />
            <div className="w-[177px] mr-[8px] text-center">Selection</div>
            <Caret dir="right" s={8} />
            <div className="ml-[4px] w-px h-full bg-[#3a3a3a]" />
            <div className="ml-[5px]"><Caret dir="left" s={8} /></div>
            <div className="ml-[219px] w-[15px] h-full bg-[#8f8f8f]" />
            <div className="ml-[224px]"><Caret dir="right" s={8} /></div>
          </div>
        </div>
        <Dock />
        <div className="w-[226px] shrink-0 flex flex-col bg-[#333333]">
          <div className="h-[13px] shrink-0 bg-[#3a3a3a] flex items-center justify-end pr-[4px]"><Chev dir="right" /></div>
          <Actions />
          <Links />
          <Appearance />
          <div className="mt-[3px] flex-1">
            <Tabs h="h-[18px]" tabs={[["Layers", "w-[41px]"], ["Artboards", "w-[56px]"]]} active="Layers" />
          </div>
        </div>
      </div>

      <Taskbar />

      <ColorPanel />
      <Dialog />
    </div>
  );
}
